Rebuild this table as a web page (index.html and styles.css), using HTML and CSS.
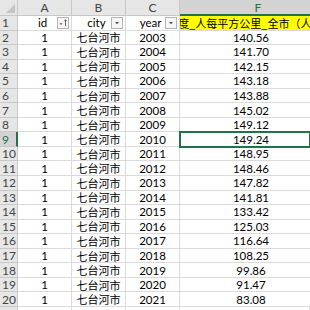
FILE: index.html
```html
<!DOCTYPE html>
<html lang="zh">
<head>
<meta charset="utf-8">
<link rel="stylesheet" href="styles.css">
</head>
<body>
<div class="sheet">
  <div class="corner"><span class="tri"></span></div>
  <div class="ch">A</div>
  <div class="ch">B</div>
  <div class="ch">C</div>
  <div class="ch sel">F</div>

  <div class="rh">1</div>
  <div class="c hd">id<span class="fbtn"><svg viewBox="0 0 12 12" width="12" height="12"><path d="M2.5 6.3 L5.5 6.3 L4 7.9 Z" fill="#555"/><path d="M8.5 9 V2.8 M7.3 4.1 L8.5 2.8 L9.7 4.1" stroke="#555" stroke-width="0.9" fill="none"/></svg></span></div>
  <div class="c hd">city<span class="fbtn"><svg viewBox="0 0 12 12" width="12" height="12"><path d="M4 5 L8 5 L6 7.3 Z" fill="#555"/></svg></span></div>
  <div class="c hd">year<span class="fbtn"><svg viewBox="0 0 12 12" width="12" height="12"><path d="M4 5 L8 5 L6 7.3 Z" fill="#555"/></svg></span></div>
  <div class="c hl"><span class="ov">人口密度_人每平方公里_全市（人/平方公里）</span></div>

  <div class="rh">2</div><div class="c">1</div><div class="c cjk">七台河市</div><div class="c">2003</div><div class="c num">140.56</div>
  <div class="rh">3</div><div class="c">1</div><div class="c cjk">七台河市</div><div class="c">2004</div><div class="c num">141.70</div>
  <div class="rh">4</div><div class="c">1</div><div class="c cjk">七台河市</div><div class="c">2005</div><div class="c num">142.15</div>
  <div class="rh">5</div><div class="c">1</div><div class="c cjk">七台河市</div><div class="c">2006</div><div class="c num">143.18</div>
  <div class="rh">6</div><div class="c">1</div><div class="c cjk">七台河市</div><div class="c">2007</div><div class="c num">143.88</div>
  <div class="rh">7</div><div class="c">1</div><div class="c cjk">七台河市</div><div class="c">2008</div><div class="c num">145.02</div>
  <div class="rh">8</div><div class="c">1</div><div class="c cjk">七台河市</div><div class="c">2009</div><div class="c num">149.12</div>
  <div class="rh selr">9</div><div class="c">1</div><div class="c cjk">七台河市</div><div class="c">2010</div><div class="c num active">149.24</div>
  <div class="rh">10</div><div class="c">1</div><div class="c cjk">七台河市</div><div class="c">2011</div><div class="c num">148.95</div>
  <div class="rh">11</div><div class="c">1</div><div class="c cjk">七台河市</div><div class="c">2012</div><div class="c num">148.46</div>
  <div class="rh">12</div><div class="c">1</div><div class="c cjk">七台河市</div><div class="c">2013</div><div class="c num">147.82</div>
  <div class="rh">13</div><div class="c">1</div><div class="c cjk">七台河市</div><div class="c">2014</div><div class="c num">141.81</div>
  <div class="rh">14</div><div class="c">1</div><div class="c cjk">七台河市</div><div class="c">2015</div><div class="c num">133.42</div>
  <div class="rh">15</div><div class="c">1</div><div class="c cjk">七台河市</div><div class="c">2016</div><div class="c num">125.03</div>
  <div class="rh">16</div><div class="c">1</div><div class="c cjk">七台河市</div><div class="c">2017</div><div class="c num">116.64</div>
  <div class="rh">17</div><div class="c">1</div><div class="c cjk">七台河市</div><div class="c">2018</div><div class="c num">108.25</div>
  <div class="rh">18</div><div class="c">1</div><div class="c cjk">七台河市</div><div class="c">2019</div><div class="c num">99.86</div>
  <div class="rh">19</div><div class="c">1</div><div class="c cjk">七台河市</div><div class="c">2020</div><div class="c num">91.47</div>
  <div class="rh">20</div><div class="c">1</div><div class="c cjk">七台河市</div><div class="c">2021</div><div class="c num">83.08</div>
  <div class="rh"></div><div class="c"></div><div class="c"></div><div class="c"></div><div class="c"></div>
</div>
</body>
</html>
```
FILE: styles.css
```css
html, body {
  margin: 0;
  padding: 0;
  overflow: hidden;
  background: #fff;
  width: 310px;
  height: 310px;
}
.sheet {
  display: grid;
  grid-template-columns: 18px 54px 54px 54px 130px;
  grid-template-rows: 16px;
  grid-auto-rows: 14.55px;
  font-family: Lato, "Liberation Sans", "Noto Sans CJK SC", sans-serif;
  font-size: 11.5px;
  color: #000;
  width: 310px;
}
.corner {
  background: #e6e6e6;
  border-right: 1px solid #c8c8c8;
  border-bottom: 1px solid #c8c8c8;
  display: flex;
  align-items: flex-end;
  justify-content: flex-end;
  padding: 0 2px 2px 0;
}
.tri {
  width: 0;
  height: 0;
  border-left: 9px solid transparent;
  border-bottom: 9px solid #c4c4c4;
}
.ch {
  background: #e6e6e6;
  color: #444;
  border-right: 1px solid #c8c8c8;
  border-bottom: 1px solid #c8c8c8;
  display: flex;
  align-items: center;
  justify-content: center;
  font-size: 12px;
}
.ch.sel {
  background: #d3d3d3;
  color: #217346;
  border-right: 0;
  border-bottom: 2px solid #217346;
  padding-left: 26px;
}
.rh {
  background: #e6e6e6;
  color: #444;
  border-right: 1px solid #c8c8c8;
  border-bottom: 1px solid #c8c8c8;
  display: flex;
  align-items: center;
  padding-left: 2px;
  font-size: 12px;
  box-sizing: border-box;
}
.rh.selr {
  background: #d3d3d3;
  color: #217346;
  border-right: 2px solid #217346;
}
.c {
  border-right: 1px solid #dadada;
  border-bottom: 1px solid #dadada;
  display: flex;
  align-items: center;
  justify-content: center;
  white-space: nowrap;
  overflow: hidden;
  position: relative;
  box-sizing: border-box;
}
.cjk {
  font-family: "Noto Sans CJK SC", sans-serif;
  font-size: 11px;
}
.hd {
  font-family: Lato, "Liberation Sans", sans-serif;
  font-size: 11.5px;
  padding-right: 4px;
}
.hl {
  background: #ffff00;
  font-family: "Noto Sans CJK SC", sans-serif;
  font-size: 11px;
  padding-left: 26px;
  border-right: 0;
}
.ov {
  flex: none;
}
.num {
  padding-left: 12px;
  border-right: 0;
}
.active {
  outline: 2px solid #217346;
  outline-offset: -1px;
  overflow: visible;
  z-index: 1;
}
.fbtn {
  position: absolute;
  right: 2px;
  top: 1px;
  width: 12px;
  height: 12px;
  border: 1px solid #b4b4b4;
  background: #f6f6f6;
  box-sizing: border-box;
  display: flex;
}
.fbtn svg {
  display: block;
  margin: -1px;
}
```
